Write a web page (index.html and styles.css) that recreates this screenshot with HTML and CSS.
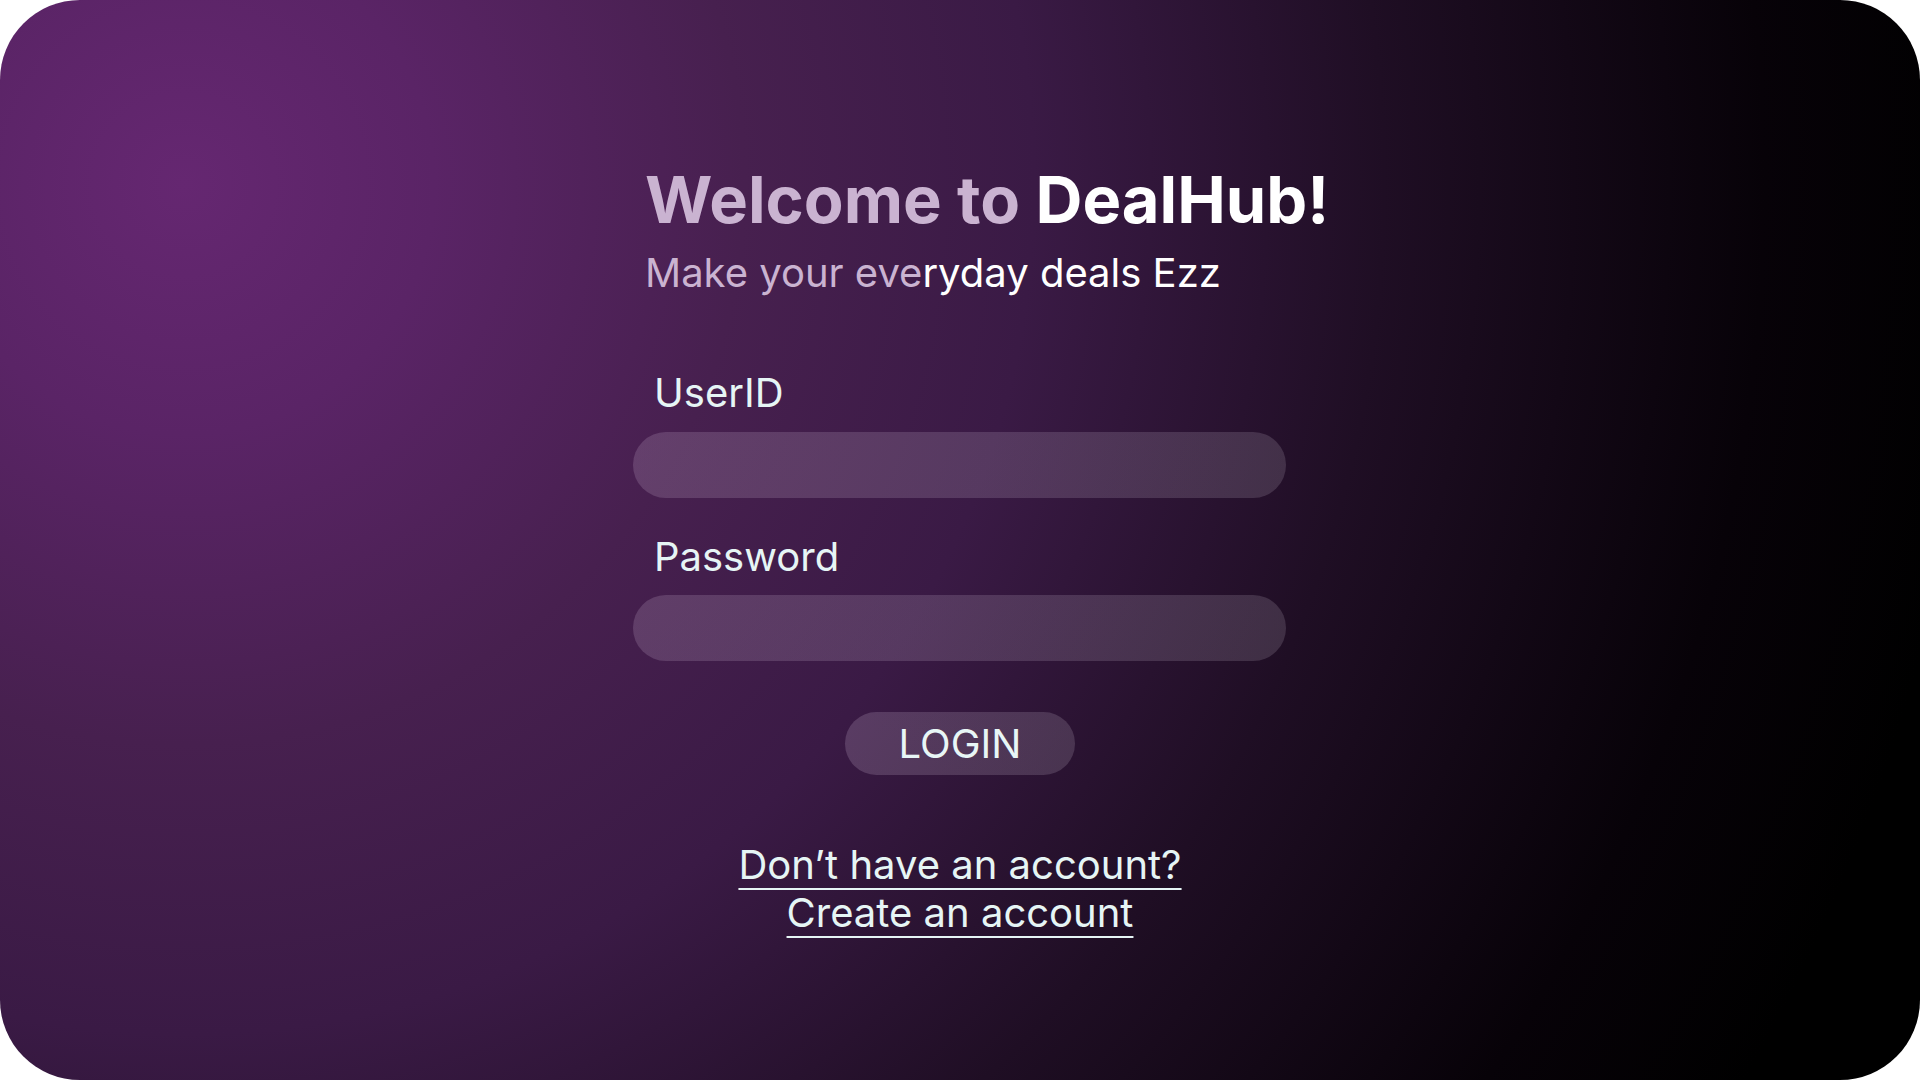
FILE: index.html
```html
<!DOCTYPE html>
<html lang="en">
<head>
<meta charset="utf-8">
<title>DealHub - Login</title>
<link rel="stylesheet" href="styles.css">
</head>
<body>
<div class="screen">
  <div class="form">
    <h1 class="title"><span class="muted">Welcome to </span><span class="bright">DealHub!</span></h1>
    <p class="subtitle"><span class="muted">Make your eve</span><span class="bright">ryday deals Ezz</span></p>
    <label class="label label-user">UserID</label>
    <div class="input"></div>
    <label class="label label-pass">Password</label>
    <div class="input"></div>
  </div>
  <div class="actions">
    <button class="login">LOGIN</button>
    <div class="links">
      <a class="link" href="#">Don’t have an account?</a>
      <a class="link" href="#">Create an account</a>
    </div>
  </div>
</div>
</body>
</html>
```
FILE: styles.css
```css
html, body {
  margin: 0;
  padding: 0;
  background: #ffffff;
}
.screen {
  width: 1920px;
  height: 1080px;
  border-radius: 80px;
  overflow: hidden;
  background: radial-gradient(circle at 184px 184px, #652771 0px, #5a2466 250px, #47204f 560px, #3a1a45 850px, #1f0e24 1200px, #070208 1580px, #000000 1800px);
  display: flex;
  flex-direction: column;
  font-family: Inter, "Noto Sans", sans-serif;
}
.form {
  margin-left: 633px;
  width: 653px;
  padding-top: 161px;
  display: flex;
  flex-direction: column;
}
.title {
  margin: 0 0 0 12px;
  font-size: 65px;
  line-height: 78px;
  font-weight: 700;
  white-space: nowrap;
}
.muted { color: #cab3d1; }
.bright { color: #ffffff; }
.subtitle {
  margin: 10px 0 0 12px;
  font-size: 40px;
  line-height: 48px;
  font-weight: 400;
  white-space: nowrap;
}
.label {
  display: block;
  margin-left: 21px;
  font-size: 40px;
  line-height: 48px;
  color: #e6f5f5;
}
.label-user { margin-top: 72px; margin-bottom: 15px; }
.label-pass { margin-top: 35px; margin-bottom: 14px; }
.input {
  height: 66px;
  border-radius: 33px;
  background: linear-gradient(90deg, rgba(235, 215, 240, 0.17), rgba(225, 215, 230, 0.16));
}
.actions {
  display: flex;
  flex-direction: column;
  align-items: center;
  padding-top: 51px;
}
.login {
  width: 230px;
  height: 63px;
  border: none;
  border-radius: 32px;
  background: linear-gradient(90deg, rgba(235, 215, 240, 0.18), rgba(225, 215, 230, 0.17));
  color: #e8f6f6;
  font-family: Inter, "Noto Sans", sans-serif;
  font-size: 40px;
  line-height: 48px;
  padding: 0;
}
.links {
  margin-top: 66px;
  display: flex;
  flex-direction: column;
  align-items: center;
}
.link {
  color: #e6f5f5;
  font-size: 40px;
  line-height: 48px;
  text-decoration: underline;
  text-decoration-thickness: 2px;
  text-underline-offset: 9px;
}
```
